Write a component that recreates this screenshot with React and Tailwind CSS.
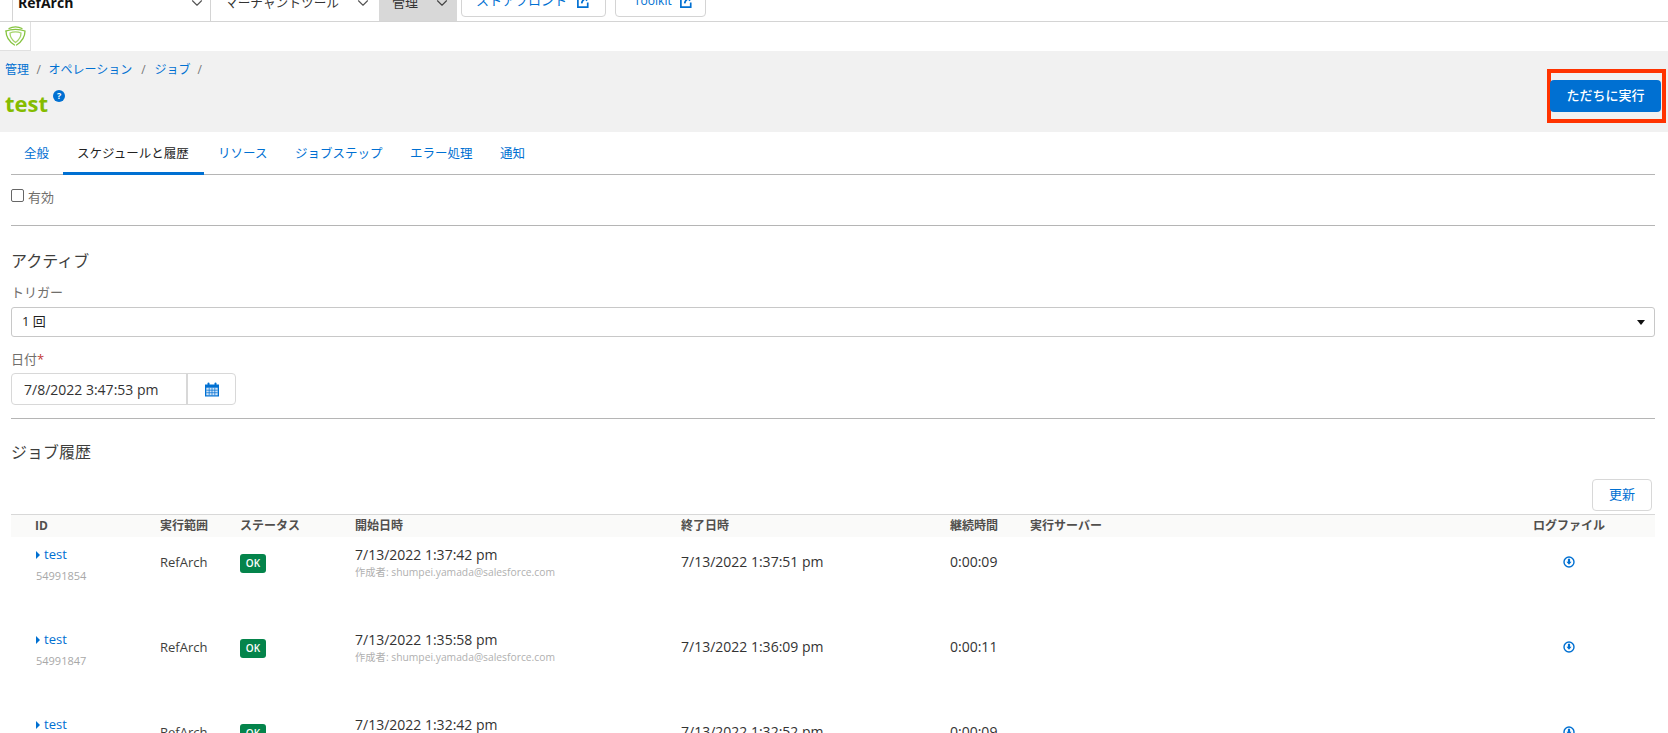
import { ChevronDown } from "lucide-react";

const font = "font-['Open_Sans','Noto_Sans_CJK_JP',sans-serif]";
const cols = "grid grid-cols-[149px_80px_115px_326px_269px_80px_453px_172px]";

const tabs = [
  { label: "全般", cls: "w-[52px] pl-[13px]" },
  { label: "スケジュールと履歴", active: true, cls: "w-[141px] pl-[14px]" },
  { label: "リソース", cls: "w-[77px] pl-[14px]" },
  { label: "ジョブステップ", cls: "w-[115px] pl-[14px]" },
  { label: "エラー処理", cls: "w-[90px] pl-[14px]" },
  { label: "通知", cls: "w-[60px] pl-[14px]" },
];

const jobs = [
  { id: "54991854", start: "7/13/2022 1:37:42 pm", end: "7/13/2022 1:37:51 pm", time: "0:00:09" },
  { id: "54991847", start: "7/13/2022 1:35:58 pm", end: "7/13/2022 1:36:09 pm", time: "0:00:11" },
  { id: "54991840", start: "7/13/2022 1:32:42 pm", end: "7/13/2022 1:32:52 pm", time: "0:00:09" },
];

function ExternalIcon() {
  return (
    <svg viewBox="0 0 16 16" className="w-[15px] h-[15px] mt-[1px] text-[#0070d2]" fill="none" stroke="currentColor" strokeWidth="1.8">
      <path d="M7 3H2v11h10.500V9" />
      <path d="M6 10c.5-3 2.500-5 6-5.500M10.500 2l3 2.500-3 2.500" />
    </svg>
  );
}

function Logo() {
  return (
    <svg viewBox="0 0 21 20" className="w-[21px] h-[20px]" fill="none" stroke="#86c440" strokeWidth="1.300" strokeLinecap="round">
      <path d="M4 2.500C6 1.300 8 .8 10.500 .8S15 1.300 17 2.500" />
      <path d="M1 5c2.500-1 5.500-1.600 9.500-1.600S17.500 4 20 5c0 5.500-3 10.500-8.500 14" />
      <path d="M1 5c0 5.500 3 10.500 8.500 14" />
      <path d="M5 7c1.500-.8 3.500-1.200 5.500-1.200S14.500 6.200 16 7c0 3.500-2 7-5.500 9.500C7 14 5 10.500 5 7z" stroke="#a5d46a" />
    </svg>
  );
}

function CalendarIcon() {
  return (
    <svg viewBox="0 0 16 16" className="w-[16px] h-[17px]" fill="#0070d2">
      <path d="M1 3h14v12H1z" />
      <rect x="3.500" y="1" width="2" height="3.500" rx="1" />
      <rect x="10.500" y="1" width="2" height="3.500" rx="1" />
      <path d="M2.300 6.200h11.400v7.600H2.300z" fill="#cfe4f8" />
      <path d="M2.300 8.700h11.400M2.300 11.200h11.400M5.200 6.200v7.600M8 6.200v7.600M10.800 6.200v7.600" stroke="#0070d2" strokeWidth="0.7" />
    </svg>
  );
}

function DownloadIcon() {
  return (
    <svg viewBox="0 0 12 12" className="w-[12px] h-[12px]">
      <circle cx="6" cy="6" r="5" fill="none" stroke="#0070d2" strokeWidth="1.400" />
      <path d="M4.900 2.800h2.200v3h1.500L6 8.700 3.400 5.800h1.500z" fill="#0070d2" />
    </svg>
  );
}

function JobRow({ job }) {
  return (
    <div className={`${cols} h-[85px] shrink-0 text-[13px] text-[#3e3e3c]`}>
      <div className="pl-[25px] pt-[9px]">
        <div className="flex items-center gap-[4px] h-[18px] text-[#0070d2]">
          <span className="w-0 h-0 border-y-[4px] border-y-transparent border-l-[4px] border-l-[#0070d2]" />
          test
        </div>
        <div className="mt-[4px] text-[11px] text-[#a8a8a8]">{job.id}</div>
      </div>
      <div className="pt-[16px]">RefArch</div>
      <div className="pt-[17px]">
        <span className="flex items-center justify-center w-[26px] h-[19px] rounded-[3px] bg-[#04844b] text-white text-[10px] font-semibold">OK</span>
      </div>
      <div className="pt-[9px]">
        <div className="h-[18px] text-[14px] leading-[18px] text-[#333]">{job.start}</div>
        <div className="mt-[1px] text-[10.300px] leading-[14px] text-[#b0b0b0]">作成者: shumpei.yamada@salesforce.com</div>
      </div>
      <div className="pt-[16px] text-[14px] leading-[18px] text-[#333]">{job.end}</div>
      <div className="pt-[16px] text-[14px] leading-[18px] text-[#333]">{job.time}</div>
      <div />
      <div className="pt-[19px] flex justify-center items-start">
        <DownloadIcon />
      </div>
    </div>
  );
}

export default function App() {
  return (
    <div className={`${font} h-[733px] overflow-hidden bg-white flex flex-col`}>
      {/* top nav, cut off by the top of the picture */}
      <div className="h-[22px] shrink-0 border-b border-[#d4d4d4] overflow-hidden">
        <div className="-mt-[16px] h-[37px] flex items-stretch text-[13px]">
          <div className="ml-[12px] w-[199px] border-x border-[#d4d4d4] pl-[5px] pr-[4px] flex items-center justify-between font-bold text-[14px] text-[#111]">
            RefArch
            <ChevronDown className="w-[18px] h-[18px] text-[#555]" strokeWidth={1.5} />
          </div>
          <div className="w-[168px] pl-[14px] pr-[7px] flex items-center justify-between text-[12.700px] text-[#333]">
            マーチャントツール
            <ChevronDown className="w-[18px] h-[18px] text-[#555]" strokeWidth={1.5} />
          </div>
          <div className="w-[78px] bg-[#d8d8d8] pl-[13px] pr-[6px] flex items-center justify-between text-[#333]">
            管理
            <ChevronDown className="w-[18px] h-[18px] text-[#444]" strokeWidth={1.5} />
          </div>
          <div className="ml-[4px] mb-[4px] w-[145px] border border-[#d4d4d4] rounded-[4px] flex items-center justify-center gap-[9px] text-[#0070d2]">
            ストアフロント
            <ExternalIcon />
          </div>
          <div className="ml-[9px] mb-[4px] w-[91px] border border-[#d4d4d4] rounded-[4px] flex items-center pl-[18px] gap-[7px] text-[12px] text-[#0070d2]">
            Toolkit
            <ExternalIcon />
          </div>
        </div>
      </div>

      <div className="h-[29px] shrink-0">
        <div className="w-[31px] h-full border-r border-b border-[#e0e0e0] flex items-center justify-center">
          <Logo />
        </div>
      </div>

      {/* page title */}
      <div className="h-[81px] shrink-0 bg-[#f1f1f1] flex justify-between pl-[5px] pr-[2px]">
        <div>
          <div className="mt-[10px] flex items-center h-[18px] text-[12px] text-[#0070d2]">
            管理<span className="mx-[7.500px] text-[#777]">/</span>オペレーション<span className="mx-[9px] text-[#777]">/</span>ジョブ<span className="mx-[7px] text-[#777]">/</span>
          </div>
          <div className="mt-[8px] flex items-start">
            <span className="text-[22px] leading-[32px] font-bold text-[#85bc00]">test</span>
            <span className="ml-[5px] mt-[3px] w-[12px] h-[12px] rounded-full bg-[#0070d2] text-white text-[9px] leading-[12px] font-bold text-center">?</span>
          </div>
        </div>
        <div className="mt-[18px] h-[54px] w-[119px] border-4 border-[#ff3300] pt-[7px]">
          <button className="-ml-px w-[111px] h-[32px] bg-[#0070d2] rounded-[4px] text-white text-[13px] font-medium">ただちに実行</button>
        </div>
      </div>

      {/* tabs */}
      <div className="h-[43px] shrink-0 ml-[11px] mr-[13px] border-b border-[#b5b5b5] flex items-stretch text-[12.500px] text-[#0070d2]">
        {tabs.map((t) => (
          <div key={t.label} className={`${t.cls} pt-[13px] -mb-px ${t.active ? "border-b-[3px] border-[#0070d2] text-[#222]" : ""}`}>
            {t.label}
          </div>
        ))}
      </div>

      <div className="ml-[11px] mr-[13px] flex flex-col">
        <div className="h-[51px] shrink-0 border-b border-[#b5b5b5] pt-[13px] flex items-start gap-[4px] text-[13px] text-[#706e6b]">
          <span className="w-[13px] h-[13px] mt-[1px] border border-[#666] rounded-[2px] bg-white" />
          <span className="leading-[18px]">有効</span>
        </div>

        <h2 className="mt-[24px] text-[16px] leading-[22px] text-[#3e3e3c]">アクティブ</h2>
        <div className="mt-[11px] text-[13px] leading-[18px] text-[#706e6b]">トリガー</div>
        <div className="mt-[6px] h-[30px] border border-[#c8c8c8] rounded-[3px] flex items-center justify-between pl-[10px] pr-[9px] text-[13px] text-[#222]">
          1 回
          <span className="w-0 h-0 border-x-[4px] border-x-transparent border-t-[5px] border-t-[#111]" />
        </div>

        <div className="mt-[13px] text-[13px] leading-[18px] text-[#706e6b]">
          日付<span className="text-[#c23934]">*</span>
        </div>
        <div className="mt-[5px] w-[225px] h-[32px] flex border border-[#d8d8d8] rounded-[4px] text-[14px] text-[#333]">
          <div className="w-[176px] pl-[12px] flex items-center border-r-2 border-[#d8d8d8]">7/8/2022 3:47:53 pm</div>
          <div className="flex-1 flex items-center justify-center">
            <CalendarIcon />
          </div>
        </div>

        <div className="mt-[13px] border-b border-[#b5b5b5]" />

        <h2 className="mt-[22px] text-[16px] leading-[22px] text-[#3e3e3c]">ジョブ履歴</h2>
        <div className="mt-[16px] flex justify-end pr-[3px]">
          <button className="w-[60px] h-[32px] border border-[#d8d8d8] rounded-[4px] text-[13px] text-[#0070d2]">更新</button>
        </div>

        <div className={`${cols} mt-[3px] h-[23px] items-center border-t border-[#d8d8d8] bg-[#fafaf9] text-[12px] font-bold text-[#514f4d]`}>
          <div className="pl-[24px]">ID</div>
          <div>実行範囲</div>
          <div>ステータス</div>
          <div>開始日時</div>
          <div>終了日時</div>
          <div>継続時間</div>
          <div>実行サーバー</div>
          <div className="text-center">ログファイル</div>
        </div>

        {jobs.map((job) => (
          <JobRow key={job.id} job={job} />
        ))}
      </div>
    </div>
  );
}
